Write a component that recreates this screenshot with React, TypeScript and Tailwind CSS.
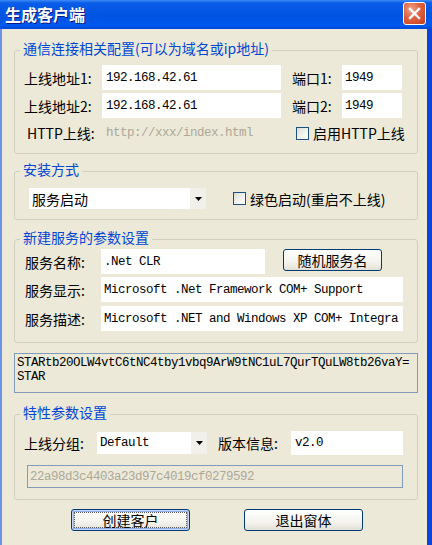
import React from "react";

const Checkbox = () => (
  <span className="inline-block w-[13px] h-[13px] shrink-0 border border-[#1c5180] bg-[linear-gradient(135deg,#dcdcd7_0%,#f4f4f2_60%,#ffffff_100%)]" />
);

const Arrow = () => (
  <span className="w-[16px] h-full flex items-center justify-center bg-[#f1f0ea]">
    <svg width="7" height="4" viewBox="0 0 7 4">
      <path d="M0 0 H7 L3.5 4 Z" fill="#000" />
    </svg>
  </span>
);

export default function App() {
  return (
    <div className="w-[432px] h-[545px] overflow-hidden flex flex-col bg-[#ECE9D8] text-black text-[14px] leading-[14px] font-['Noto_Sans_CJK_SC',sans-serif]">
      {/* Title bar */}
      <div className="h-[29px] shrink-0 flex items-center pl-[5px] pr-[6px] pb-[2px] bg-[linear-gradient(180deg,#3d8af7_0%,#0a5de8_10%,#0054e3_55%,#0058ee_88%,#0047d6_100%)]">
        <span className="text-white font-bold text-[16px] leading-[16px] [text-shadow:1px_1px_0_#0a1883]">
          生成客户端
        </span>
        <div className="ml-auto w-[23px] h-[23px] rounded-[3px] border border-white flex items-center justify-center bg-[radial-gradient(circle_at_35%_30%,#f0a58c_0%,#e0603e_45%,#c3401e_100%)]">
          <svg width="13" height="13" viewBox="0 0 13 13">
            <path d="M2 2 L11 11 M11 2 L2 11" stroke="#fff" strokeWidth="2.4" strokeLinecap="square" />
          </svg>
        </div>
      </div>

      {/* Body */}
      <div className="flex-1 flex border-l-2 border-l-[#6d93e6] border-r-[5px] border-r-[#0b44d8]">
        <div className="pl-[12px] flex flex-col">
          {/* Group 1 */}
          <fieldset className="mt-[12px] w-[404px] border border-[#D0D0BF] rounded-[3px] p-0">
            <legend className="ml-[5px] px-[3px] pb-[5px] leading-[14px] text-[#0046D5]">
              通信连接相关配置(可以为域名或ip地址)
            </legend>
            <div className="pl-[9px] pt-[5px] pb-[10px] flex flex-col">
              <div className="flex items-center h-[25px]">
                <span className="w-[78px]">上线地址1:</span>
                <div className="w-[179px] h-[25px] bg-white pl-[4px] flex items-center font-['Liberation_Mono',monospace] text-[12.5px] tracking-[-0.5px]">
                  192.168.42.61
                </div>
                <span className="ml-[11px] w-[50px]">端口1:</span>
                <div className="w-[60px] h-[25px] bg-white pl-[3px] flex items-center font-['Liberation_Mono',monospace] text-[12.5px] tracking-[-0.5px]">
                  1949
                </div>
              </div>
              <div className="flex items-center h-[25px] mt-[3px]">
                <span className="w-[78px]">上线地址2:</span>
                <div className="w-[179px] h-[25px] bg-white pl-[4px] flex items-center font-['Liberation_Mono',monospace] text-[12.5px] tracking-[-0.5px]">
                  192.168.42.61
                </div>
                <span className="ml-[11px] w-[50px]">端口2:</span>
                <div className="w-[60px] h-[25px] bg-white pl-[3px] flex items-center font-['Liberation_Mono',monospace] text-[12.5px] tracking-[-0.5px]">
                  1949
                </div>
              </div>
              <div className="flex items-center h-[20px] mt-[5px]">
                <span className="w-[82px] pl-[3px]">HTTP上线:</span>
                <span className="w-[190px] text-[#ACA899] font-['Liberation_Mono',monospace] text-[12.5px] tracking-[-0.5px]">
                  http://xxx/index.html
                </span>
                <Checkbox />
                <span className="ml-[4px]">启用HTTP上线</span>
              </div>
            </div>
          </fieldset>

          {/* Group 2 */}
          <fieldset className="mt-[8px] w-[404px] border border-[#D0D0BF] rounded-[3px] p-0">
            <legend className="ml-[5px] px-[3px] pb-[5px] leading-[14px] text-[#0046D5]">安装方式</legend>
            <div className="pl-[14px] pt-[7px] pb-[10px] flex items-center">
              <div className="w-[177px] h-[21px] bg-white flex items-center">
                <span className="flex-1 pl-[3px]">服务启动</span>
                <Arrow />
              </div>
              <span className="ml-[27px]">
                <Checkbox />
              </span>
              <span className="ml-[4px]">绿色启动(重启不上线)</span>
            </div>
          </fieldset>

          {/* Group 3 */}
          <fieldset className="mt-[10px] w-[404px] border border-[#D0D0BF] rounded-[3px] p-0">
            <legend className="ml-[5px] px-[3px] pb-[5px] leading-[14px] text-[#0046D5]">新建服务的参数设置</legend>
            <div className="pl-[10px] pt-0 pb-[11px] flex flex-col">
              <div className="flex items-start h-[25px]">
                <span className="w-[76px] h-[25px] flex items-center">服务名称:</span>
                <div className="w-[164px] h-[25px] bg-white pl-[3px] flex items-center font-['Liberation_Mono',monospace] text-[12.5px] tracking-[-0.5px]">
                  .Net CLR
                </div>
                <button className="ml-[18px] w-[99px] h-[22px] rounded-[3px] border border-[#003C74] bg-[linear-gradient(180deg,#ffffff_0%,#f4f3ee_60%,#e3e0d6_100%)] flex items-center justify-center text-[14px] leading-[14px]">
                  随机服务名
                </button>
              </div>
              <div className="flex items-center h-[25px] mt-[3px]">
                <span className="w-[76px]">服务显示:</span>
                <div className="w-[302px] h-[25px] bg-white pl-[3px] flex items-center font-['Liberation_Mono',monospace] text-[12.5px] tracking-[-0.5px] whitespace-pre overflow-hidden">
                  Microsoft .Net Framework COM+ Support
                </div>
              </div>
              <div className="flex items-center h-[25px] mt-[4px]">
                <span className="w-[76px]">服务描述:</span>
                <div className="w-[302px] h-[25px] bg-white pl-[3px] flex items-center font-['Liberation_Mono',monospace] text-[12.5px] tracking-[-0.5px] whitespace-pre overflow-hidden">
                  Microsoft .NET and Windows XP COM+ Integra
                </div>
              </div>
            </div>
          </fieldset>

          {/* Text area */}
          <div className="mt-[10px] w-[404px] h-[40px] border border-[#7F9DB9] pl-[2px] pt-[2px] font-['Liberation_Mono',monospace] text-[12.5px] tracking-[-0.5px] leading-[14px] whitespace-pre">
            <div>STARtb20OLW4vtC6tNC4tby1vbq9ArW9tNC1uL7QurTQuLW8tb26vaY=</div>
            <div>STAR</div>
          </div>

          {/* Group 4 */}
          <fieldset className="mt-[12px] w-[404px] border border-[#D0D0BF] rounded-[3px] p-0">
            <legend className="ml-[5px] px-[3px] pb-[5px] leading-[14px] text-[#0046D5]">特性参数设置</legend>
            <div className="pl-[9px] pt-[7px] pb-[11px] flex flex-col">
              <div className="flex items-center h-[24px]">
                <span className="w-[73px]">上线分组:</span>
                <div className="w-[110px] h-[22px] bg-white flex items-center">
                  <span className="flex-1 pl-[3px] font-['Liberation_Mono',monospace] text-[12.5px] tracking-[-0.5px]">Default</span>
                  <Arrow />
                </div>
                <span className="ml-[11px] w-[73px]">版本信息:</span>
                <div className="w-[112px] h-[24px] bg-white pl-[4px] flex items-center font-['Liberation_Mono',monospace] text-[12.5px] tracking-[-0.5px]">
                  v2.0
                </div>
              </div>
              <div className="mt-[10px] ml-[3px] w-[376px] h-[23px] border border-[#7F9DB9] pl-[2px] flex items-center text-[#ACA899] font-['Liberation_Mono',monospace] text-[12.5px] tracking-[-0.5px]">
                22a98d3c4403a23d97c4019cf0279592
              </div>
            </div>
          </fieldset>

          {/* Buttons */}
          <div className="mt-[9px] flex">
            <button className="ml-[57px] w-[119px] h-[22px] rounded-[3px] border border-[#003C74] p-[2px] bg-[linear-gradient(180deg,#ffffff_0%,#f4f3ee_60%,#e3e0d6_100%)] shadow-[inset_0_0_0_1px_#c2d7f7,inset_0_0_0_2px_#8fb0ec] flex">
              <span className="flex-1 border border-dotted border-[#555] flex items-center justify-center text-[14px] leading-[14px]">
                创建客户
              </span>
            </button>
            <button className="ml-[54px] w-[119px] h-[22px] rounded-[3px] border border-[#003C74] bg-[linear-gradient(180deg,#ffffff_0%,#f4f3ee_60%,#e3e0d6_100%)] flex items-center justify-center text-[14px] leading-[14px]">
              退出窗体
            </button>
          </div>
        </div>
      </div>
    </div>
  );
}
